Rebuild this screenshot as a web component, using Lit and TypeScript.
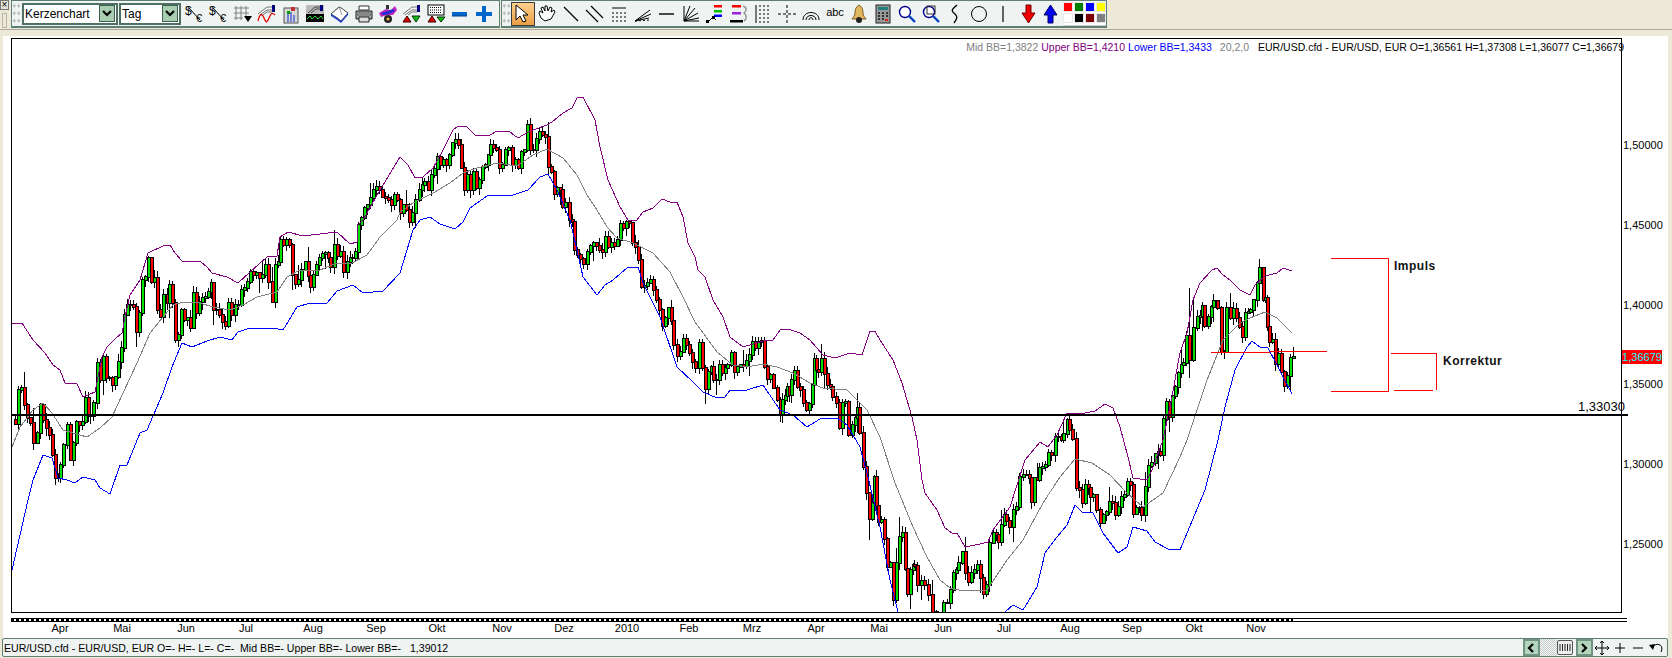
import { LitElement, html, svg, css } from 'lit';
import { customElement } from 'lit/decorators.js';

// close price per candle, as x,y pairs in page pixels
const CLOSES = [
  12,420, 15,424, 18,390, 21,388, 24,405, 27,418, 30,423, 33,443, 37,433, 40,405, 43,420, 46,428, 49,435, 52,455, 55,478, 58,478,
  60,465, 63,445, 67,425, 70,460, 73,443, 76,422, 79,425, 82,422, 85,398, 88,415, 90,416, 93,403, 97,363, 100,380, 103,357, 106,378,
  109,378, 112,385, 115,377, 118,362, 121,348, 124,315, 127,305, 130,305, 133,307, 136,332, 139,313, 142,280, 145,277, 148,258, 151,282,
  154,278, 157,310, 160,317, 163,295, 167,303, 169,285, 172,303, 175,340, 178,335, 181,310, 184,320, 187,318, 190,328, 193,293, 196,313,
  199,302, 202,298, 205,297, 208,292, 211,283, 213,310, 216,310, 219,315, 222,322, 225,326, 228,303, 231,315, 235,305, 238,305, 241,290,
  244,288, 247,282, 250,272, 253,275, 256,273, 259,278, 262,275, 265,265, 268,282, 272,302, 275,265, 278,262, 280,240, 283,245, 286,240,
  289,245, 292,275, 295,284, 298,280, 301,270, 305,262, 308,276, 310,287, 313,275, 316,265, 319,258, 322,254, 325,253, 328,258, 330,267,
  334,245, 337,256, 340,252, 343,272, 347,262, 350,258, 352,258, 355,252, 358,225, 361,218, 364,208, 367,205, 370,198, 373,190, 376,187,
  379,190, 382,197, 385,198, 388,200, 391,205, 394,195, 397,200, 400,213, 403,205, 406,210, 409,222, 412,213, 415,200, 419,190, 422,185,
  424,182, 428,190, 431,175, 434,169, 437,157, 440,165, 443,160, 446,165, 449,155, 452,143, 455,140, 458,145, 461,168, 464,190, 467,175,
  470,190, 473,172, 476,188, 479,180, 482,167, 485,165, 488,155, 490,145, 493,148, 496,150, 499,168, 502,165, 505,150, 508,148, 512,165,
  515,160, 518,168, 521,152, 524,150, 527,125, 530,150, 533,150, 536,139, 539,132, 542,135, 545,137, 548,167, 551,172, 554,194, 557,188,
  560,190, 562,207, 565,203, 569,220, 572,222, 574,250, 577,255, 580,259, 583,264, 587,252, 590,246, 593,243, 596,246, 599,250, 602,252,
  605,237, 608,247, 611,243, 614,246, 617,240, 620,224, 623,228, 626,222, 629,223, 632,243, 635,247, 638,260, 641,287, 644,286, 647,283,
  650,280, 653,290, 656,300, 659,310, 662,326, 665,318, 668,308, 671,321, 673,345, 677,356, 680,352, 683,339, 686,345, 689,353, 692,362,
  695,368, 699,343, 702,368, 705,389, 708,372, 711,367, 713,380, 716,380, 719,365, 722,373, 725,368, 727,365, 731,353, 734,372, 737,367,
  740,365, 743,366, 746,361, 749,355, 752,342, 755,348, 758,342, 761,341, 764,367, 767,379, 770,375, 773,388, 777,400, 780,415, 782,400,
  785,396, 787,387, 789,395, 791,380, 794,371, 797,387, 800,390, 803,403, 806,410, 809,404, 812,385, 814,359, 816,370, 818,372, 821,359,
  824,374, 827,385, 830,387, 832,397, 836,403, 839,428, 842,403, 845,402, 848,435, 852,425, 855,418, 857,408, 859,433, 863,467, 866,493,
  869,519, 872,503, 874,477, 876,506, 878,522, 881,520, 884,539, 887,567, 890,563, 893,600, 896,563, 899,537, 902,533, 905,569, 907,594,
  910,570, 913,565, 914,566, 917,585, 921,581, 924,585, 928,595, 932,612, 936,625, 939,625, 943,603, 947,603, 950,590, 953,573, 956,570,
  958,563, 962,552, 965,573, 968,582, 971,573, 974,570, 977,565, 980,578, 983,594, 986,585, 989,543, 993,533, 996,535, 998,542, 1001,525,
  1004,515, 1006,521, 1009,527, 1013,510, 1016,507, 1019,477, 1023,475, 1026,475, 1029,478, 1031,502, 1034,478, 1037,480, 1039,468,
  1042,467, 1045,465, 1048,453, 1051,455, 1055,437, 1058,437, 1061,440, 1063,434, 1067,420, 1069,430, 1072,439, 1076,488, 1079,490,
  1082,503, 1085,485, 1088,488, 1090,497, 1093,495, 1096,510, 1100,523, 1103,515, 1106,512, 1109,502, 1112,503, 1115,515, 1118,507,
  1121,497, 1124,495, 1127,482, 1130,485, 1133,514, 1136,508, 1139,508, 1141,515, 1145,487, 1148,466, 1151,463, 1155,454, 1158,452,
  1160,455, 1163,419, 1166,402, 1169,417, 1172,396, 1175,387, 1178,373, 1181,365, 1183,363, 1186,336, 1189,360, 1193,328, 1197,317,
  1200,316, 1202,306, 1204,326, 1208,317, 1211,307, 1213,301, 1217,308, 1221,352, 1224,352, 1226,308, 1230,318, 1233,309, 1236,318,
  1239,327, 1242,337, 1245,313, 1248,312, 1250,310, 1253,300, 1257,283, 1259,268, 1263,300, 1265,298, 1267,327, 1269,342, 1272,340,
  1275,364, 1278,354, 1281,372, 1284,386, 1287,376, 1290,358, 1293,357,
];

// wick ends that stand out in the picture: x -> [high, low]
const WICKS: Record<number, [number, number]> = {
  1259: [259, 285], 1293: [347, 359], 875: [448, 510], 869: [495, 540], 899: [517, 570], 1284: [370, 392],
  24: [372, 410], 548: [122, 175], 527: [120, 152], 1189: [288, 378], 1193: [300, 362],
};

const UPPER = '12,323 22,323 33,340 45,353 53,365 60,370 65,383 77,384 83,397 95,392 102,357 107,347 115,339 122,333 125,317 130,295 140,280 148,253 163,246 170,245 175,253 182,261 200,261 207,267 212,273 227,277 238,283 250,272 267,257 277,256 280,237 288,232 303,236 320,234 337,232 350,244 357,242 358,225 363,220 380,190 400,157 408,165 415,178 423,177 433,168 442,152 453,130 458,126 467,127 475,135 490,135 497,131 510,132 518,138 528,132 547,125 552,122 563,113 572,108 577,98 583,97 595,120 600,147 608,180 620,207 628,220 637,220 643,212 653,208 662,199 670,202 677,202 683,217 688,243 695,257 698,270 705,277 713,300 723,317 730,337 743,347 763,341 773,340 780,330 788,329 800,333 810,340 823,355 835,358 850,353 862,355 867,340 870,331 875,331 880,340 893,360 902,383 912,417 917,440 922,480 925,493 937,510 945,528 952,533 957,533 965,547 980,544 988,542 993,530 1010,507 1025,460 1040,442 1048,447 1057,435 1067,413 1080,414 1095,411 1105,404 1113,408 1120,427 1128,457 1133,478 1147,480 1152,470 1163,440 1172,397 1178,363 1180,353 1187,333 1193,300 1200,283 1212,270 1217,268 1223,275 1230,280 1240,290 1250,295 1255,285 1265,276 1277,273 1283,268 1292,271';
const MID = '12,447 20,427 33,410 43,403 52,413 63,430 73,433 87,437 100,428 112,417 123,393 137,363 150,333 163,317 173,305 183,302 200,303 213,307 230,310 243,305 257,297 277,292 287,277 300,270 320,270 337,263 350,264 367,255 380,237 397,220 400,212 413,203 433,193 450,183 463,173 477,168 497,163 517,166 533,155 547,149 563,158 577,175 587,195 597,210 607,227 617,238 633,243 653,253 670,272 683,297 695,322 717,352 733,365 747,367 763,364 777,367 793,373 810,383 823,388 847,390 867,410 880,437 895,483 913,527 927,557 940,580 950,588 963,591 987,590 1007,560 1023,540 1043,503 1060,477 1075,459 1092,463 1110,475 1127,493 1143,507 1163,493 1180,457 1187,440 1207,380 1223,340 1240,323 1250,318 1265,312 1277,318 1292,333';
const LOWER = '12,570 28,500 33,480 43,455 52,458 58,478 67,480 75,483 83,477 95,480 100,488 110,494 120,465 127,465 140,433 147,430 163,393 172,367 182,343 192,347 207,341 220,337 232,340 238,332 250,328 273,328 283,330 297,307 310,303 327,303 337,291 353,285 363,293 383,291 400,273 413,230 420,220 430,217 440,224 455,229 463,222 470,208 487,196 513,195 528,190 540,177 548,174 557,190 570,220 577,250 583,277 597,295 605,285 613,280 627,268 638,267 643,283 660,317 677,367 693,382 703,392 717,398 725,397 730,390 747,390 763,385 780,410 793,415 807,427 820,419 837,418 847,425 860,447 867,473 880,527 890,580 898,612 899,620 1004,620 1005,612 1013,605 1023,610 1037,587 1045,553 1057,537 1067,525 1075,505 1082,512 1093,513 1103,533 1118,553 1127,547 1133,527 1147,531 1155,542 1168,549 1180,550 1205,490 1218,440 1225,407 1235,370 1247,347 1252,341 1260,347 1268,348 1277,365 1283,377 1292,394';

const PRICE_LABELS = ['1,50000', '1,45000', '1,40000', '1,35000', '1,30000', '1,25000'];
const MONTHS: [string, number][] = [
  ['Apr', 60], ['Mai', 122], ['Jun', 186], ['Jul', 246], ['Aug', 313], ['Sep', 376], ['Okt', 437], ['Nov', 502], ['Dez', 564], ['2010', 627],
  ['Feb', 689], ['Mrz', 752], ['Apr', 816], ['Mai', 879], ['Jun', 943], ['Jul', 1004], ['Aug', 1070], ['Sep', 1132], ['Okt', 1194], ['Nov', 1256],
];
const SWATCHES = ['#ff0000', '#008000', '#0000ff', '#ffff00', '#ffffff', '#000000', '#800000', '#808080'];

function wickLength(seed: number): number {
  const r = ((seed * 9301 + 49297) % 233280) / 233280;
  return r > 0.95 ? 9 + Math.round(r * 6) : 1 + Math.round(r * 7);
}

function renderCandles() {
  const out = [];
  for (let i = 2; i < CLOSES.length; i += 2) {
    const x = CLOSES[i];
    const open = CLOSES[i - 1];
    const close = CLOSES[i + 1];
    const top = Math.min(open, close);
    const bottom = Math.max(open, close);
    const wick = WICKS[x] ?? [top - wickLength(x * 7 + i), bottom + wickLength(x * 13 + i)];
    const fill = close <= open ? '#00e000' : '#ff0000';
    out.push(svg`
      <rect x=${x} y=${wick[0]} width="1" height=${wick[1] - wick[0]} fill="#000"></rect>
      <rect x=${x - 1} y=${top - 1} width="4" height=${bottom - top + 2} fill="#000"></rect>
      <rect x=${x} y=${top} width="2" height=${bottom - top} fill=${fill}></rect>`);
  }
  return out;
}

const wrap = (body: unknown, w = 20, h = 20) => html`<svg class="ico" width=${w} height=${h} viewBox="0 0 ${w} ${h}">${body}</svg>`;

const hatch = svg`<path d="M1 10 L10 3 L15 3 M3 11 L10 6 L15 6 M6 11 L10 8 L15 8" fill="none" stroke="#777"></path><rect x="15" y="1" width="3" height="7" fill="#000080"></rect>`;
const dollarEuro = wrap(svg`<text x="0" y="11" font-size="12" font-family="Liberation Sans, sans-serif">$</text><path d="M4 4 L15 16" stroke="#000"></path><text x="11" y="18" font-size="11" font-family="Liberation Sans, sans-serif">€</text>`, 20, 20);

const LEFT_ICONS = [
  dollarEuro,
  dollarEuro,
  wrap(svg`<path d="M3 2V16M8 2V16M13 2V12M1 4H16M1 9H16M1 14H10" stroke="#808080" fill="none"></path><path d="M11 12H19L15 18Z" fill="#000"></path>`),
  wrap(svg`${hatch}<path d="M1 17C3 9 5 9 7 14S10 19 12 14S15 8 18 11" fill="none" stroke="#e00000" stroke-width="1.3"></path>`),
  wrap(svg`<rect x="3" y="4" width="14" height="15" fill="#d8d8d8" stroke="#555"></rect><path d="M6 7h3v3H6z" fill="#00a000"></path><path d="M10 3h4v4h-4z" fill="#c03030"></path><path d="M6 10h2v8H6zM9 8h2v10H9zM12 11h2v7h-2z" fill="#7080d0"></path>`),
  wrap(svg`<rect x="1" y="1" width="18" height="9" fill="#bbb"></rect><path d="M3 9L10 3H15M6 9L11 5H15" fill="none" stroke="#444"></path><rect x="15" y="1" width="3" height="6" fill="#000080"></rect><rect x="1" y="10" width="18" height="8" fill="#000"></rect><path d="M2 15L5 12L7 15L10 12L13 15L16 12L18 15" fill="none" stroke="#30e030"></path>`),
  wrap(svg`<path d="M1 10L9 3C12 4 15 7 18 9L11 17C8 14 4 12 1 10Z" fill="#fff" stroke="#333"></path><path d="M1 10C4 12 8 14 11 17L18 9V11L11 19C8 16 4 14 1 12Z" fill="#2040d0"></path><path d="M9 3L12 11" stroke="#999"></path>`),
  wrap(svg`<path d="M5 2H15V6H5Z" fill="#fff" stroke="#333"></path><path d="M2 7H18V15H2Z" fill="#a8a8a8" stroke="#222"></path><path d="M3 9H17M3 11H17" stroke="#666"></path><path d="M5 13H15V18H5Z" fill="#ddd" stroke="#222"></path>`),
  wrap(svg`<path d="M1 9L8 5L13 6L17 2L19 6L15 11L9 11L3 13Z" fill="#c020c0"></path><path d="M3 9L10 7L15 5L17 7L11 10L5 11Z" fill="#2030d0"></path><circle cx="10" cy="15" r="4" fill="#222"></circle><circle cx="10" cy="15" r="1.5" fill="#e8c040"></circle><rect x="8" y="1" width="3" height="4" fill="#333"></rect>`),
  wrap(svg`${hatch}<path d="M1 18L5 12L9 18Z" fill="#e00000" stroke="#300"></path><path d="M10 12H18L14 18Z" fill="#10c010" stroke="#030"></path>`),
  wrap(svg`<rect x="2" y="1" width="16" height="10" fill="#fff" stroke="#000"></rect><path d="M4 3.5H16M4 6H16M4 8.5H16" stroke="#000" stroke-dasharray="1 1"></path><path d="M2 18L6 12L10 18Z" fill="#e00000" stroke="#300"></path><path d="M11 13H19L15 18Z" fill="#10c010" stroke="#030"></path>`),
  wrap(svg`<rect x="2" y="8" width="15" height="4" fill="#0066cc"></rect><path d="M2 12H17" stroke="#003a80"></path>`),
  wrap(svg`<path d="M8 2h4v6h6v4h-6v6H8v-6H2V8h6z" fill="#0066cc"></path>`),
];

const RIGHT_ICONS = [
  wrap(svg`<path d="M6 9L4 4L6 3L8 7L8 2L10 2L11 7L13 3L15 4L14 8L17 6L18 8L14 15L8 17L4 14L2 9L3 7Z" fill="#fff" stroke="#000"></path>`),
  wrap(svg`<path d="M3 3L17 17" stroke="#000" stroke-width="1.2"></path>`),
  wrap(svg`<path d="M1 6L13 18M6 2L18 14" stroke="#000" stroke-width="1.2"></path>`),
  wrap(svg`<path d="M3 4H17" stroke="#000"></path><path d="M3 9H17M3 13H17M3 17H17" stroke="#000" stroke-dasharray="2 2"></path>`),
  wrap(svg`<path d="M2 17L17 6M2 17L18 10M2 17L16 14" stroke="#000" fill="none"></path><path d="M2 17L18 16" stroke="#000" stroke-dasharray="2 2"></path>`),
  wrap(svg`<path d="M2 10H17" stroke="#000" stroke-width="1.4"></path>`),
  wrap(svg`<path d="M3 17V2M3 17L9 2M3 17L14 4M3 17L17 9M3 17L18 14M3 17H18" stroke="#000" fill="none"></path>`),
  wrap(svg`<rect x="9" y="1" width="8" height="2.5" fill="#ff0000"></rect><rect x="9" y="6" width="8" height="2.5" fill="#00c000"></rect><rect x="9" y="10.5" width="8" height="2.5" fill="#0000ff"></rect><path d="M3 18L8 13L11 16" fill="none" stroke="#000"></path><rect x="1" y="16" width="3" height="3" fill="#000"></rect><rect x="7" y="12" width="3" height="3" fill="#000"></rect>`),
  wrap(svg`<rect x="3" y="1" width="9" height="2.5" fill="#ff0000"></rect><rect x="3" y="8" width="9" height="2.5" fill="#a020e0"></rect><rect x="1" y="16" width="13" height="2.5" fill="#000"></rect><path d="M14 2C18 3 18 7 15 9C18 11 18 15 15 17" fill="none" stroke="#808080" stroke-width="1.2"></path>`),
  wrap(svg`<path d="M3 1V19" stroke="#000"></path><path d="M7 1V19M11 1V19M15 1V19" stroke="#000" stroke-dasharray="2 2"></path>`),
  wrap(svg`<path d="M10 1V19M1 10H19" stroke="#000" stroke-dasharray="3 2"></path>`),
  wrap(svg`<path d="M2 16C2 6 18 6 18 16M5 16C5 10 15 10 15 16M8 16C8 13 12 13 12 16" fill="none" stroke="#000"></path>`),
  wrap(svg`<text x="10" y="12" text-anchor="middle" font-size="11" font-family="Liberation Sans, sans-serif">abc</text>`),
  wrap(svg`<path d="M10 1C13 3 14 5 14 9C14 12 16 13 17 15H3C4 13 6 12 6 9C6 5 7 3 10 1Z" fill="#e0b860" stroke="#7a5a20"></path><circle cx="10" cy="16" r="3" fill="#222"></circle>`),
  wrap(svg`<rect x="3" y="1" width="14" height="18" fill="#999" stroke="#222"></rect><rect x="5" y="3" width="10" height="3" fill="#208080"></rect><path d="M5 8h2v2H5zM9 8h2v2H9zM13 8h2v2h-2zM5 11h2v2H5zM9 11h2v2H9zM13 11h2v2h-2zM5 14h2v2H5zM9 14h2v2H9z" fill="#333"></path><rect x="12" y="15" width="3" height="2" fill="#e02020"></rect>`),
  wrap(svg`<circle cx="8" cy="8" r="5.5" fill="#fff" stroke="#000090" stroke-width="1.4"></circle><path d="M12 12L18 18" stroke="#0040c0" stroke-width="2.4"></path>`),
  wrap(svg`<circle cx="8" cy="8" r="5.5" fill="#fff" stroke="#000090" stroke-width="1.4"></circle><rect x="6" y="2" width="8" height="8" fill="none" stroke="#333"></rect><path d="M12 12L18 18" stroke="#0040c0" stroke-width="2.4"></path>`),
  wrap(svg`<path d="M12 1C6 6 6 7 10 10C13 13 12 15 9 19" fill="none" stroke="#000" stroke-width="1.3"></path>`),
  wrap(svg`<circle cx="10" cy="10" r="7.5" fill="none" stroke="#000"></circle>`),
  wrap(svg`<path d="M10 2V18" stroke="#000" stroke-width="1.2"></path>`),
];

@customElement('app-root')
export class AppRoot extends LitElement {
  static styles = css`
    :host {
      display: block;
      width: 1672px;
      height: 658px;
      overflow: hidden;
      background: #ece9d8;
      font-family: 'Liberation Sans', Arial, sans-serif;
      font-size: 10.5px;
      color: #000;
    }

    .ico {
      overflow: visible;
    }

    .topbars {
      display: flex;
      height: 28px;
    }

    .handle {
      width: 11px;
      display: flex;
      flex-direction: column;
      align-items: flex-start;
    }

    .close {
      width: 9px;
      height: 10px;
      border: 1px solid #777;
      box-sizing: border-box;
      background: #e4e4dc;
      font-size: 10px;
      line-height: 8px;
      text-align: center;
    }

    .handle-bar {
      margin: 3px 0 0 2px;
      width: 3px;
      height: 13px;
      border: 1px solid #b8b6a8;
      background: #ece9d8;
    }

    .toolbar {
      display: flex;
      align-items: center;
      height: 28px;
      box-sizing: border-box;
      background: #eff4f2;
      border: 1px solid #5f7f76;
      border-bottom-width: 2px;
    }

    .toolbar.one {
      width: 489px;
    }

    .toolbar.two {
      width: 606px;
      margin-left: 1px;
    }

    .grip {
      flex: none;
      width: 9px;
      height: 24px;
      background: radial-gradient(circle, #b4bcb8 1.4px, transparent 1.6px) 0 0 / 4.5px 7.5px;
    }

    .combo {
      flex: none;
      display: flex;
      align-items: center;
      justify-content: space-between;
      height: 22px;
      box-sizing: border-box;
      border: 2px solid #4f6f62;
      background: #fff;
      padding: 0 1px;
      font-size: 12px;
      margin-left: 1px;
    }

    .combo.chart {
      width: 96px;
    }

    .combo.period {
      width: 62px;
    }

    .drop {
      width: 16px;
      height: 17px;
      box-sizing: border-box;
      border: 1px solid #3f5f52;
      background: #a9cdb1;
      display: flex;
      align-items: center;
      justify-content: center;
    }

    .cells {
      display: flex;
      flex: none;
    }

    .cells.left {
      margin-left: 2px;
    }

    .cell {
      flex: none;
      display: flex;
      align-items: center;
      justify-content: center;
      width: 24.08px;
      height: 24px;
    }

    .pointer {
      flex: none;
      display: flex;
      align-items: center;
      justify-content: center;
      width: 24px;
      height: 24px;
      box-sizing: border-box;
      border: 1px solid #3c3c3c;
      background: linear-gradient(#fbd08c, #ec9f45);
    }

    .cells.right {
      width: 480px;
    }

    .cells.right .cell {
      width: 24px;
    }

    .arrows {
      display: flex;
      flex: none;
      margin-left: 2px;
    }

    .arrows .cell {
      width: 22px;
    }

    .palette {
      flex: none;
      display: grid;
      grid-template-columns: repeat(4, 10px);
      grid-auto-rows: 10px;
      gap: 1px;
      align-self: flex-start;
      margin: 1px 0 0 2px;
      padding-bottom: 2px;
      background: #fff;
      border-bottom: 1px solid #ccc;
    }

    .swatch {
      border: 1px solid #e8e8e8;
      box-sizing: border-box;
    }

    .ruler {
      height: 6px;
      margin-top: 1px;
      border-top: 1px solid #aca899;
    }

    .main {
      margin-left: 3px;
      width: 1665px;
      height: 602px;
      box-sizing: border-box;
      padding: 2px 0 0 8px;
      background: #fff;
    }

    .chart-row {
      display: flex;
    }

    .plot {
      position: relative;
      flex: none;
      width: 1611px;
      height: 575px;
      box-sizing: border-box;
      border: 1px solid #000;
    }

    .canvas {
      position: absolute;
      left: -1px;
      top: -1px;
      overflow: visible;
    }

    .canvas .data {
      shape-rendering: crispEdges;
    }

    .legend {
      position: absolute;
      top: 1px;
      right: -3px;
      display: flex;
      white-space: nowrap;
      line-height: 14px;
    }

    .legend .mid {
      color: #808080;
    }

    .legend .upper {
      color: #800080;
      margin-left: 3px;
    }

    .legend .lower {
      color: #0000ff;
      margin-left: 3px;
    }

    .legend .params {
      color: #808080;
      margin-left: 8px;
    }

    .legend .ohlc {
      margin-left: 9px;
    }

    .price-axis {
      position: relative;
      flex: 1;
      font-size: 11px;
    }

    .price {
      position: absolute;
      left: 1px;
      line-height: 14px;
      white-space: nowrap;
    }

    .price.last {
      left: 0;
      width: 40px;
      background: #ff0000;
      color: #00ffff;
      text-align: center;
    }

    .strip {
      position: relative;
      width: 1616px;
      height: 2px;
      margin-top: 5px;
      border-top: 1px solid #000;
      border-bottom: 1px solid #000;
    }

    .ticks {
      display: block;
      width: 1282px;
      height: 2px;
      background: repeating-linear-gradient(90deg, #000 0 3px, #fff 3px 5px);
    }

    .months {
      position: relative;
      height: 14px;
      font-size: 11px;
    }

    .month {
      position: absolute;
      top: 0;
      transform: translateX(-50%);
      line-height: 12px;
    }

    .status {
      display: flex;
      align-items: center;
      justify-content: space-between;
      width: 1666px;
      height: 19px;
      box-sizing: border-box;
      margin-left: 2px;
      border: 1px solid #5f7f76;
      border-radius: 2px;
      background: #eff4f2;
      padding: 0 2px 0 1px;
      white-space: nowrap;
      font-size: 10.6px;
    }

    .nav {
      display: flex;
      align-items: center;
      height: 17px;
    }

    .nav-btn {
      width: 17px;
      height: 17px;
      box-sizing: border-box;
      border: 2px solid #6f9282;
      background: #b4d4bc;
      display: flex;
      align-items: center;
      justify-content: center;
    }

    .track {
      width: 17px;
      height: 17px;
      background: repeating-conic-gradient(#c8ccca 0 25%, #f4f6f5 0 50%) 0 0 / 2px 2px;
    }

    .thumb {
      width: 16px;
      height: 15px;
      box-sizing: border-box;
      border: 1px solid #555;
      border-radius: 2px;
      background: #eee;
      display: flex;
      align-items: center;
      justify-content: center;
      margin-right: 3px;
    }

    .nav-icon {
      width: 18px;
      display: flex;
      align-items: center;
      justify-content: center;
    }
  `;

  private chevron(dir: 'left' | 'right' | 'down') {
    const d = dir === 'down' ? 'M1 2L5 6L9 2' : dir === 'left' ? 'M6 1L2 5L6 9' : 'M2 1L6 5L2 9';
    return wrap(svg`<path d=${d} fill="none" stroke="#000" stroke-width="2.2"></path>`, 10, 10);
  }

  private priceTop(i: number): number {
    // labels sit 79.8px apart, first one centred at y=145; the plot starts at y=38
    return 145 + i * 79.8 - 38 - 7;
  }

  private renderChart() {
    return html`
      <svg class="canvas" width="1661" height="600" viewBox="11 38 1661 600">
        <defs>
          <clipPath id="plot"><rect x="12" y="39" width="1609" height="573"></rect></clipPath>
        </defs>
        <g class="data" clip-path="url(#plot)">
          ${renderCandles()}
          <polyline points=${MID} fill="none" stroke="#808080"></polyline>
          <polyline points=${UPPER} fill="none" stroke="#800080"></polyline>
          <polyline points=${LOWER} fill="none" stroke="#0000ff"></polyline>
        </g>
        <g class="data">
          <rect x="11" y="414" width="1617" height="2" fill="#000"></rect>
          <path d="M1211 352H1270L1328 351M1331 258H1388V391H1331M1391 353H1436V390M1394 390H1433" fill="none" stroke="#ff0000"></path>
        </g>
        <text x="1578" y="411" font-size="13" font-family="Liberation Sans, sans-serif">1,33030</text>
        <text x="1394" y="270" font-size="12" font-weight="700" letter-spacing="0.5" fill="#111" font-family="Liberation Sans, sans-serif">Impuls</text>
        <text x="1443" y="365" font-size="12" font-weight="700" letter-spacing="0.5" fill="#111" font-family="Liberation Sans, sans-serif">Korrektur</text>
      </svg>
      <div class="legend">
        <span class="mid">Mid BB=1,3822</span>
        <span class="upper">Upper BB=1,4210</span>
        <span class="lower">Lower BB=1,3433</span>
        <span class="params">20,2,0</span>
        <span class="ohlc">EUR/USD.cfd - EUR/USD, EUR O=1,36561 H=1,37308 L=1,36077 C=1,36679</span>
      </div>
    `;
  }

  render() {
    return html`
      <div class="topbars">
        <div class="handle">
          <div class="close">×</div>
          <div class="handle-bar"></div>
        </div>
        <div class="toolbar one">
          <div class="grip"></div>
          <div class="combo chart">Kerzenchart<span class="drop">${this.chevron('down')}</span></div>
          <div class="combo period">Tag<span class="drop">${this.chevron('down')}</span></div>
          <div class="cells left">${LEFT_ICONS.map((icon) => html`<div class="cell">${icon}</div>`)}</div>
        </div>
        <div class="toolbar two">
          <div class="grip"></div>
          <div class="pointer">
            ${wrap(svg`<path d="M3 1V16L7 12L10 18L13 17L10 11H15Z" fill="#fff" stroke="#000"></path>`)}
          </div>
          <div class="cells right">${RIGHT_ICONS.map((icon) => html`<div class="cell">${icon}</div>`)}</div>
          <div class="arrows">
            <div class="cell">${wrap(svg`<path d="M6 1H11V9H15L8.5 19L2 9H6Z" fill="#ee0000" stroke="#700"></path>`, 17, 20)}</div>
            <div class="cell">${wrap(svg`<path d="M6 19H11V11H15L8.5 1L2 11H6Z" fill="#0000ee" stroke="#006"></path>`, 17, 20)}</div>
          </div>
          <div class="palette">
            ${SWATCHES.map((c) => html`<div class="swatch" style="background:${c}"></div>`)}
          </div>
        </div>
      </div>
      <div class="ruler"></div>
      <div class="main">
        <div class="chart-row">
          <div class="plot">${this.renderChart()}</div>
          <div class="price-axis">
            ${PRICE_LABELS.map((p, i) => html`<div class="price" style="top:${this.priceTop(i)}px">${p}</div>`)}
            <div class="price last" style="top:312px">1,36679</div>
          </div>
        </div>
        <div class="strip"><span class="ticks"></span></div>
        <div class="months">
          ${MONTHS.map(([m, x]) => html`<span class="month" style="left:${x - 11}px">${m}</span>`)}
        </div>
      </div>
      <div class="status">
        <span>EUR/USD.cfd - EUR/USD, EUR O=- H=- L=- C=-&nbsp; Mid BB=- Upper BB=- Lower BB=- &nbsp; 1,39012</span>
        <div class="nav">
          <div class="nav-btn">${this.chevron('left')}</div>
          <div class="track"></div>
          <div class="thumb">${wrap(svg`<path d="M1 1V8M3.5 1V8M6 1V8M8.5 1V8M11 1V8" stroke="#222"></path>`, 12, 9)}</div>
          <div class="nav-btn">${this.chevron('right')}</div>
          <div class="nav-icon">${wrap(svg`<path d="M7 0V14M0 7H14M5 2L7 0L9 2M5 12L7 14L9 12M2 5L0 7L2 9M12 5L14 7L12 9" fill="none" stroke="#000"></path>`, 14, 14)}</div>
          <div class="nav-icon">${wrap(svg`<path d="M6 1V11M1 6H11" stroke="#000"></path>`, 12, 12)}</div>
          <div class="nav-icon">${wrap(svg`<path d="M1 6H11" stroke="#000"></path>`, 12, 12)}</div>
          <div class="nav-icon">${wrap(svg`<path d="M1 3L7 2L5 8Z" fill="#000"></path><path d="M5 4C11 0 16 4 13 10" fill="none" stroke="#000"></path>`, 16, 12)}</div>
        </div>
      </div>
    `;
  }
}

declare global {
  interface HTMLElementTagNameMap {
    'app-root': AppRoot;
  }
}
